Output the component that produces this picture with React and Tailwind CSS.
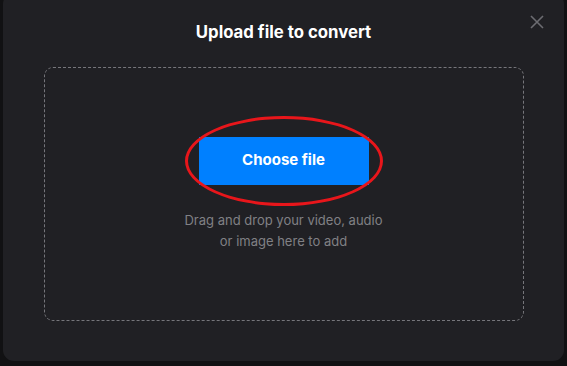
import React from 'react';

export default function App() {
  return (
    <div className="h-[366px] w-[567px] overflow-hidden bg-[#111113]" style={{ fontFamily: 'Inter, "Noto Sans", sans-serif' }}>
      <div className="relative -mt-[7px] ml-[3px] h-[368px] w-[561px] rounded-[11px] bg-[#202024]">
        <button className="absolute right-[20px] top-[22px] text-[#6c6c71]" aria-label="Close">
          <svg width="14" height="14" viewBox="0 0 14 14" fill="none" stroke="currentColor" strokeWidth="1.6">
            <path d="M1 1L13 13M13 1L1 13" />
          </svg>
        </button>

        <h2 className="pt-[29px] text-center text-[16.75px] font-bold leading-[20px] text-white">Upload file to convert</h2>

        <div className="mx-auto mt-[25px] flex h-[254px] w-[480px] flex-col items-center justify-center rounded-[9px] border border-dashed border-[#76767b]">
          <div className="relative">
            <div className="pointer-events-none absolute -inset-x-[14px] -inset-y-[21px] rounded-[50%] border-[3px] border-[#e8161b]" />
            <button className="flex h-[48px] w-[170px] items-center justify-center bg-[#0080ff] text-[15px] font-bold text-white">
              Choose file
            </button>
          </div>
          <p className="mt-[25px] text-center text-[13px] leading-[21px] text-[#808085]">
            Drag and drop your video, audio
            <br />
            or image here to add
          </p>
        </div>
      </div>
    </div>
  );
}
